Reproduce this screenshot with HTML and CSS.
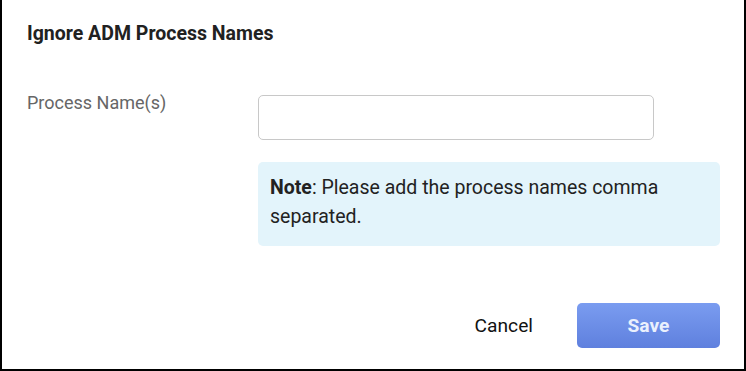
FILE: index.html
```html
<!DOCTYPE html>
<html lang="en">
<head>
<meta charset="UTF-8" />
<title>Ignore ADM Process Names</title>
<link rel="stylesheet" href="styles.css">
</head>
<body>
  <div class="dialog">
    <h2 class="dialog-title">Ignore ADM Process Names</h2>

    <div class="form-row">
      <label class="form-label" for="process-names">Process Name(s)</label>
      <div class="form-field">
        <input type="text" id="process-names" class="text-input" />
        <div class="note">
          <strong>Note</strong>: Please add the process names comma separated.
        </div>
      </div>
    </div>

    <div class="dialog-actions">
      <button type="button" class="btn btn-cancel">Cancel</button>
      <button type="button" class="btn btn-save">Save</button>
    </div>
  </div>
</body>
</html>
```

FILE: styles.css
```css
* {
  box-sizing: border-box;
}

body {
  margin: 0;
  font-family: Roboto, "Liberation Sans", sans-serif;
  background: #fff;
  color: #212121;
}

.dialog {
  width: 746px;
  height: 371px;
  border: 2px solid #000;
  border-top: none;
  padding: 21px 24px 0 25px;
  display: flex;
  flex-direction: column;
}

.dialog-title {
  margin: 0;
  font-size: 19.5px;
  font-weight: 700;
  line-height: 26px;
}

.form-row {
  display: flex;
  margin-top: 48px;
}

.form-label {
  width: 231px;
  font-size: 18px;
  color: #666;
  line-height: 16px;
}

.form-field {
  width: 462px;
}

.text-input {
  display: block;
  width: 396px;
  height: 45px;
  border: 1px solid #c8c8c8;
  border-radius: 5px;
  font: inherit;
  padding: 0 12px;
  outline: none;
}

.note {
  margin-top: 22px;
  background: #e3f4fb;
  border-radius: 5px;
  padding: 11px 12px 15px;
  font-size: 19.5px;
  line-height: 29px;
  color: #222;
}

.dialog-actions {
  margin-top: auto;
  margin-bottom: 21px;
  display: flex;
  justify-content: flex-end;
  align-items: center;
  gap: 44px;
}

.btn {
  font-family: inherit;
  font-size: 19.2px;
  border: none;
  cursor: pointer;
}

.btn-cancel {
  background: none;
  color: #111;
  padding: 0;
}

.btn-save {
  width: 143px;
  height: 45px;
  border-radius: 5px;
  font-weight: 700;
  color: #eaf0fd;
  background: linear-gradient(#7a9cf0, #5f80de);
}
```
